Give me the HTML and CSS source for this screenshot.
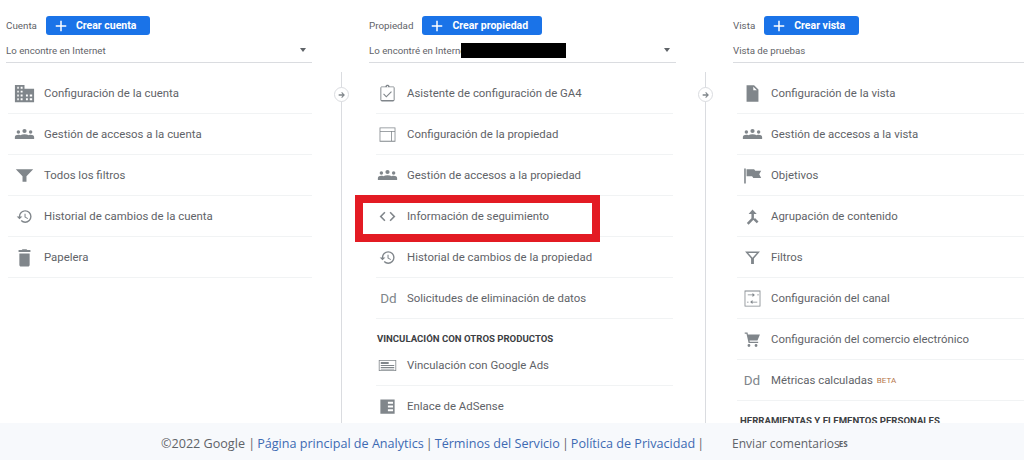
FILE: index.html
```html
<!DOCTYPE html>
<html lang="es">
<head>
    <meta charset="UTF-8">
    <meta name="viewport" content="width=device-width, initial-scale=1.0">
    <title>Administrar</title>
    <link rel="stylesheet" href="styles.css">
</head>
<body>
    <!-- iconos compartidos -->
    <svg class="sprite" aria-hidden="true">
        <symbol id="i-plus" viewBox="0 0 24 24"><path d="M19 13h-6v6h-2v-6H5v-2h6V5h2v6h6z"/></symbol>
        <symbol id="i-domain" viewBox="0 0 24 24"><path d="M12 7V3H2v18h20V7H12zM6 19H4.500v-2H6v2zm0-4H4.500v-2H6v2zm0-4H4.500V9H6v2zm0-4H4.500V5H6v2zm4 12H8v-2h2v2zm0-4H8v-2h2v2zm0-4H8V9h2v2zm0-4H8V5h2v2zm5.500 12H13.500v-2h2v2zm0-4h-2v-2h2v2zm4.500 4h-2.500v-2H20v2zm0-4h-2.500v-2H20v2z"/></symbol>
        <symbol id="i-people" viewBox="0 0 24 24"><circle cx="12" cy="8" r="2.400"/><circle cx="5" cy="9" r="2"/><circle cx="19" cy="9" r="2"/><path d="M1 17v-2.200C1 13.300 3 12.400 5 12.400c.8 0 1.500.1 2.100.4C8.500 12 10.300 11.600 12 11.600s3.500.4 4.900 1.200c.6-.3 1.300-.4 2.100-.4 2 0 4 .9 4 2.400V17z"/></symbol>
        <symbol id="i-funnel" viewBox="0 0 24 24"><path d="M1 4h22l-8.500 9v7h-5v-7z"/></symbol>
        <symbol id="i-history" viewBox="0 0 24 24"><path d="M13 3a9 9 0 0 0-9 9H1l3.890 3.890.07.14L9 12H6c0-3.870 3.130-7 7-7s7 3.130 7 7-3.130 7-7 7c-1.930 0-3.680-.79-4.940-2.060l-1.420 1.420A8.954 8.954 0 0 0 13 21a9 9 0 0 0 0-18zm-1 5v5l4.280 2.540.72-1.210-3.500-2.080V8H12z"/></symbol>
        <symbol id="i-delete" viewBox="0 0 24 24"><path d="M5.500 21.500c0 1.100.9 2 2 2h9c1.100 0 2-.9 2-2V7h-13zM19.500 2.500h-4l-1-1h-5l-1 1h-4V5h15z"/></symbol>
        <symbol id="i-clipboard" viewBox="0 0 24 24"><path d="M19 3h-4.200C14.400 1.800 13.300 1 12 1s-2.400.8-2.800 2H5c-1.100 0-2 .9-2 2v15c0 1.100.9 2 2 2h14c1.100 0 2-.9 2-2V5c0-1.100-.9-2-2-2zm.8 17.200H4.200V4.200h15.600zM12 2.500a.8.8 0 1 1 0 1.600.8.8 0 0 1 0-1.600zM10.500 17 6.500 13l1-1 3 3 6-6 1 1z"/></symbol>
        <symbol id="i-frame" viewBox="0 0 24 24"><path d="M2 3v18h20V3zm19 1v3.500H3V4zM3 20V8.500h13.500V20zm14.500 0V8.500H21V20z"/></symbol>
        <symbol id="i-code" viewBox="0 0 24 24"><path d="M9.400 16.600 4.800 12l4.600-4.600L8 6l-6 6 6 6zm5.200 0 4.600-4.600-4.600-4.600L16 6l6 6-6 6z"/></symbol>
        <symbol id="i-ads" viewBox="0 0 24 24"><path d="M1 5v14h22V5zm21 13H2V6h20zM3.500 7.500h10V10h-10zM3.500 11.500h17v1h-17zM3.500 14h17v1h-17zM3.500 16h17v1h-17z"/></symbol>
        <symbol id="i-adsense" viewBox="0 0 24 24"><path d="M3 3v18h18V3zm9.500 3H19v2.500h-6.500zm0 4.800H19v2.500h-6.500zm0 4.700H19V18h-6.500z"/></symbol>
        <symbol id="i-doc" viewBox="0 0 24 24"><path d="M14 1.500H4.500V22.500h15V7zm-1 6.500V3.500L17.500 8z"/></symbol>
        <symbol id="i-flag" viewBox="0 0 24 24"><path d="M1.500 3h2v19h-2zM4.500 4h9.500l1.500 2H23l-2.500 4.500L23 15H13l-1.500-2h-7z"/></symbol>
        <symbol id="i-merge" viewBox="0 0 24 24"><path d="M18 21.500l2.500-2.500-5-5-2.500 2.500zM6.500 8.500H10.500v6L4 21l2.500 2.500 7.500-7.500V8.500h4L12 2z"/></symbol>
        <symbol id="i-filter" viewBox="0 0 24 24"><path d="M1.500 3.500h21l-8.500 10V21h-4v-7.500zM6 5.500l6 7 6-7z"/></symbol>
        <symbol id="i-tune" viewBox="0 0 24 24"><path d="M2 2v20h20V2zm19 19H3V3h18zM6 7h6V5l3 2.500-3 2.500V8H6zM18 7h2v1h-2zM18 16h-6v-2l-3 2.500 3 2.500v-2h6zM5 16h2v1H5z"/></symbol>
        <symbol id="i-cart" viewBox="0 0 24 24"><path d="M7 18.500a2 2 0 1 0 0 4 2 2 0 0 0 0-4zM17 18.500a2 2 0 1 0 0 4 2 2 0 0 0 0-4zM1 2v2h2.500l3 13H20v-2H8.200l-.4-1.500H19L22.500 5H5.500L5 2z"/></symbol>
        <symbol id="i-arrow" viewBox="0 0 24 24"><path d="M12 5l-1.800 1.800 3.200 3.200H4v4h9.400l-3.200 3.200L12 19l7-7z"/></symbol>
    </svg>

    <main class="columns">
        <section class="column column-account">
            <header class="column-header">
                <div class="column-title">
                    <span class="column-label">Cuenta</span>
                    <button class="create-button"><svg class="plus"><use href="#i-plus"/></svg>Crear cuenta</button>
                </div>
                <div class="picker">
                    <span>Lo encontre en Internet</span>
                    <span class="caret"></span>
                </div>
            </header>
            <div class="column-body">
                <ul class="menu">
                    <li class="menu-item"><span class="menu-icon"><svg class="icon large"><use href="#i-domain"/></svg></span>Configuración de la cuenta</li>
                    <li class="menu-item"><span class="menu-icon"><svg class="icon medium"><use href="#i-people"/></svg></span>Gestión de accesos a la cuenta</li>
                    <li class="menu-item"><span class="menu-icon"><svg class="icon"><use href="#i-funnel"/></svg></span>Todos los filtros</li>
                    <li class="menu-item"><span class="menu-icon"><svg class="icon small"><use href="#i-history"/></svg></span>Historial de cambios de la cuenta</li>
                    <li class="menu-item"><span class="menu-icon"><svg class="icon"><use href="#i-delete"/></svg></span>Papelera</li>
                </ul>
            </div>
        </section>

        <section class="column column-property">
            <header class="column-header">
                <div class="column-title">
                    <span class="column-label">Propiedad</span>
                    <button class="create-button"><svg class="plus"><use href="#i-plus"/></svg>Crear propiedad</button>
                </div>
                <div class="picker">
                    <span>Lo encontré en Internet</span>
                    <span class="redacted"></span>
                    <span class="caret"></span>
                </div>
            </header>
            <div class="column-body">
                <span class="arrow-badge"><svg class="arrow"><use href="#i-arrow"/></svg></span>
                <ul class="menu">
                    <li class="menu-item"><span class="menu-icon"><svg class="icon"><use href="#i-clipboard"/></svg></span>Asistente de configuración de GA4</li>
                    <li class="menu-item"><span class="menu-icon"><svg class="icon"><use href="#i-frame"/></svg></span>Configuración de la propiedad</li>
                    <li class="menu-item"><span class="menu-icon"><svg class="icon medium"><use href="#i-people"/></svg></span>Gestión de accesos a la propiedad</li>
                    <li class="menu-item highlighted"><span class="menu-icon"><svg class="icon"><use href="#i-code"/></svg></span>Información de seguimiento</li>
                    <li class="menu-item"><span class="menu-icon"><svg class="icon small"><use href="#i-history"/></svg></span>Historial de cambios de la propiedad</li>
                    <li class="menu-item"><span class="menu-icon letters">Dd</span>Solicitudes de eliminación de datos</li>
                </ul>
                <h3 class="menu-heading">VINCULACIÓN CON OTROS PRODUCTOS</h3>
                <ul class="menu">
                    <li class="menu-item"><span class="menu-icon"><svg class="icon"><use href="#i-ads"/></svg></span>Vinculación con Google Ads</li>
                    <li class="menu-item"><span class="menu-icon"><svg class="icon"><use href="#i-adsense"/></svg></span>Enlace de AdSense</li>
                </ul>
            </div>
        </section>

        <section class="column column-view">
            <header class="column-header">
                <div class="column-title">
                    <span class="column-label">Vista</span>
                    <button class="create-button"><svg class="plus"><use href="#i-plus"/></svg>Crear vista</button>
                </div>
                <div class="picker">
                    <span>Vista de pruebas</span>
                </div>
            </header>
            <div class="column-body">
                <span class="arrow-badge"><svg class="arrow"><use href="#i-arrow"/></svg></span>
                <ul class="menu">
                    <li class="menu-item"><span class="menu-icon"><svg class="icon"><use href="#i-doc"/></svg></span>Configuración de la vista</li>
                    <li class="menu-item"><span class="menu-icon"><svg class="icon medium"><use href="#i-people"/></svg></span>Gestión de accesos a la vista</li>
                    <li class="menu-item"><span class="menu-icon"><svg class="icon"><use href="#i-flag"/></svg></span>Objetivos</li>
                    <li class="menu-item"><span class="menu-icon"><svg class="icon small"><use href="#i-merge"/></svg></span>Agrupación de contenido</li>
                    <li class="menu-item"><span class="menu-icon"><svg class="icon small"><use href="#i-filter"/></svg></span>Filtros</li>
                    <li class="menu-item"><span class="menu-icon"><svg class="icon"><use href="#i-tune"/></svg></span>Configuración del canal</li>
                    <li class="menu-item"><span class="menu-icon"><svg class="icon small"><use href="#i-cart"/></svg></span>Configuración del comercio electrónico</li>
                    <li class="menu-item"><span class="menu-icon letters">Dd</span>Métricas calculadas <span class="beta">BETA</span></li>
                </ul>
                <h3 class="menu-heading">HERRAMIENTAS Y ELEMENTOS PERSONALES</h3>
            </div>
        </section>
    </main>

    <footer class="footer">
        <span>©2022 Google |</span>
        <a href="#">Página principal de Analytics</a>
        <span>|</span>
        <a href="#">Términos del Servicio</a>
        <span>|</span>
        <a href="#">Política de Privacidad</a>
        <span>|</span>
        <span class="feedback">Enviar comentarios</span><span class="feedback-tag">ES</span>
    </footer>
</body>
</html>
```

FILE: styles.css
```css
* {
    box-sizing: border-box;
}

body {
    font-family: 'Roboto', 'Liberation Sans', sans-serif;
    margin: 0;
    height: 460px;
    overflow: hidden;
    background-color: #fff;
    color: #5f6368;
}

.sprite {
    display: none;
}

.columns {
    display: grid;
    grid-template-columns: 341px 364px 319px;
    height: 423px;
    overflow: hidden;
}

.column {
    display: flex;
    flex-direction: column;
    min-width: 0;
}

.column-header {
    height: 72px;
    padding: 16px 29px 0 28px;
}

.column-account .column-header {
    padding-left: 6px;
}

.column-view .column-header {
    padding-right: 0;
}

.column-title {
    display: flex;
    align-items: center;
    gap: 9px;
    height: 19px;
    font-size: 9.8px;
}

.create-button {
    display: flex;
    align-items: center;
    height: 19px;
    padding: 0 14px 0 6px;
    border: none;
    border-radius: 3px;
    background-color: #1a73e8;
    color: #fff;
    font-family: inherit;
    font-size: 10.5px;
    font-weight: 700;
}

.plus {
    width: 18px;
    height: 18px;
    margin-right: 6px;
    fill: #fff;
}

.picker {
    position: relative;
    display: flex;
    align-items: center;
    justify-content: space-between;
    height: 28px;
    padding: 3px 6px 0 0;
    border-bottom: 1px solid #dadce0;
    font-size: 9.7px;
    white-space: nowrap;
}

.caret {
    width: 0;
    height: 0;
    border-left: 3.5px solid transparent;
    border-right: 3.5px solid transparent;
    border-top: 4px solid #5f6368;
}

.redacted {
    position: absolute;
    left: 92px;
    top: 8px;
    width: 105px;
    height: 15px;
    background-color: #000;
}

.column-body {
    position: relative;
    flex: 1;
    padding: 1px 29px 0 8px;
}

.column-property .column-body,
.column-view .column-body {
    border-left: 1px solid #dadce0;
}

.column-property .column-body {
    padding-left: 34px;
    padding-right: 32px;
}

.column-view .column-body {
    padding-left: 31px;
    padding-right: 0;
}

.arrow-badge {
    position: absolute;
    left: -8px;
    top: 15px;
    display: flex;
    align-items: center;
    justify-content: center;
    width: 15px;
    height: 15px;
    border: 1px solid #dadce0;
    border-radius: 50%;
    background-color: #fff;
}

.arrow {
    width: 10px;
    height: 10px;
    fill: #80868b;
}

.menu {
    list-style: none;
    margin: 0;
    padding: 0;
}

.menu-item {
    position: relative;
    display: flex;
    align-items: center;
    height: 41px;
    border-bottom: 1px solid #f1f3f4;
    font-size: 11.4px;
    white-space: nowrap;
}

.menu-icon {
    display: flex;
    align-items: center;
    justify-content: center;
    flex: none;
    width: 32px;
    margin-right: 4px;
    color: #80868b;
}

.column-property .menu-icon {
    width: 22px;
    margin-right: 9px;
}

.column-view .menu-icon {
    width: 30px;
    margin-right: 4px;
}

.column-property .letters {
    padding-left: 3px;
}

.icon {
    width: 19px;
    height: 19px;
    fill: #80868b;
}

.icon.small {
    width: 17px;
    height: 17px;
}

.icon.medium {
    width: 21px;
    height: 21px;
}

.icon.large {
    width: 23px;
    height: 23px;
}

.letters {
    font-size: 13.5px;
}

.beta {
    margin-left: 4px;
    color: #b5764a;
    font-size: 8px;
}

.highlighted::after {
    content: "";
    box-sizing: border-box;
    position: absolute;
    left: -21px;
    top: -1px;
    width: 245px;
    height: 47px;
    border: 8px solid #e31b23;
}

.menu-heading {
    display: flex;
    align-items: center;
    height: 26px;
    margin: 0;
    padding-top: 12px;
    color: #3c4043;
    font-size: 9.6px;
    font-weight: 700;
}

.column-property .menu-heading {
    padding-left: 1px;
}

.column-view .menu-heading {
    padding-left: 3px;
}

.footer {
    display: flex;
    align-items: center;
    justify-content: flex-start;
    gap: 2px;
    height: 37px;
    padding: 3px 0 0 161px;
    background-color: #f7f9fc;
    font-family: 'Open Sans', sans-serif;
    font-size: 12.6px;
    white-space: nowrap;
}

.footer a {
    color: #3d6ab3;
    text-decoration: none;
}

.feedback {
    margin-left: 26px;
    font-size: 12px;
}

.feedback-tag {
    margin-left: -3px;
    font-size: 8px;
    font-weight: 700;
}
```
